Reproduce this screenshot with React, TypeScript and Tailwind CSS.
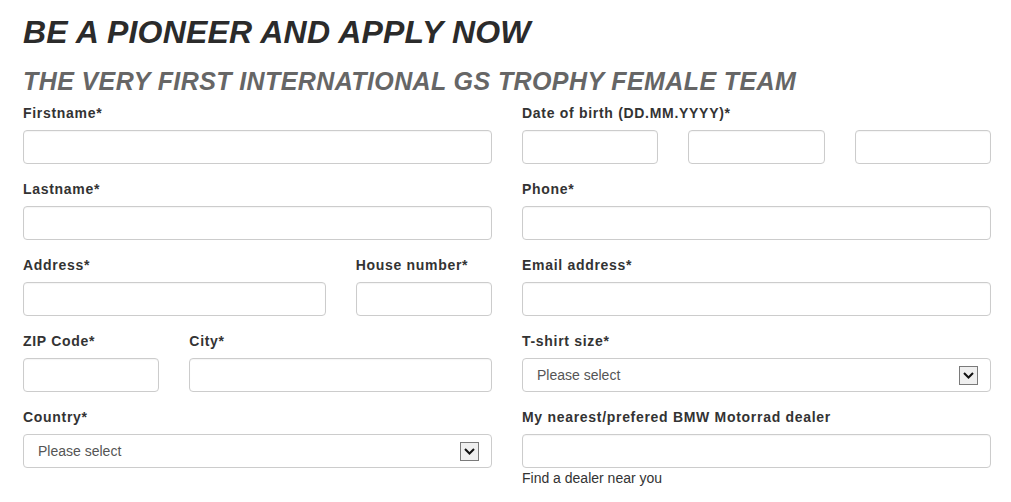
import type { ReactNode } from 'react';

function Field({ label, children, hint }: { label: string; children: ReactNode; hint?: string }) {
  return (
    <div className="flex flex-col">
      <label className="mb-[7px] text-[14px] leading-[20px] font-bold tracking-[0.7px] text-[#333]">{label}</label>
      {children}
      {hint && <p className="text-[14px] leading-[20px] text-[#333]">{hint}</p>}
    </div>
  );
}

function TextInput() {
  return (
    <input
      type="text"
      className="h-[34px] w-full rounded-[4px] border border-[#ccc] bg-white px-3 text-[14px] text-[#555] shadow-[inset_0_1px_1px_rgba(0,0,0,0.04)] outline-none"
    />
  );
}

function SelectBox() {
  return (
    <div className="flex h-[34px] w-full items-center justify-between rounded-[4px] border border-[#ccc] bg-white pr-[12px] pl-[14px]">
      <span className="text-[14px] text-[#555]">Please select</span>
      <span className="flex h-[19px] w-[19px] items-center justify-center border border-[#7a7a7a] bg-[#efefef]">
        <svg width="11" height="7" viewBox="0 0 11 7" fill="none">
          <polyline points="1,1 5.5,5.5 10,1" stroke="#111" strokeWidth="2" />
        </svg>
      </span>
    </div>
  );
}

export default function App() {
  return (
    <div className="min-h-[502px] bg-white pt-[16px] pr-[20px] pl-[23px] font-['Liberation_Sans',Arial,sans-serif]">
      <h1 className="text-[32px] leading-[32px] font-bold tracking-[0.2px] text-[#2b2b2b] italic">
        BE A PIONEER AND APPLY NOW
      </h1>
      <h2 className="mt-[21px] text-[25px] leading-[25px] font-bold tracking-[0.4px] text-[#666] italic">
        THE VERY FIRST INTERNATIONAL GS TROPHY FEMALE TEAM
      </h2>

      <form className="mt-[9px] grid grid-cols-2 gap-x-[30px]">
        <div className="flex flex-col gap-[15px]">
          <Field label="Firstname*">
            <TextInput />
          </Field>
          <Field label="Lastname*">
            <TextInput />
          </Field>
          <div className="grid grid-cols-3 gap-x-[30px]">
            <div className="col-span-2">
              <Field label="Address*">
                <TextInput />
              </Field>
            </div>
            <Field label="House number*">
              <TextInput />
            </Field>
          </div>
          <div className="grid grid-cols-3 gap-x-[30px]">
            <Field label="ZIP Code*">
              <TextInput />
            </Field>
            <div className="col-span-2">
              <Field label="City*">
                <TextInput />
              </Field>
            </div>
          </div>
          <Field label="Country*">
            <SelectBox />
          </Field>
        </div>

        <div className="flex flex-col gap-[15px]">
          <Field label="Date of birth (DD.MM.YYYY)*">
            <div className="grid grid-cols-3 gap-x-[30px]">
              <TextInput />
              <TextInput />
              <TextInput />
            </div>
          </Field>
          <Field label="Phone*">
            <TextInput />
          </Field>
          <Field label="Email address*">
            <TextInput />
          </Field>
          <Field label="T-shirt size*">
            <SelectBox />
          </Field>
          <Field label="My nearest/prefered BMW Motorrad dealer" hint="Find a dealer near you">
            <TextInput />
          </Field>
        </div>
      </form>
    </div>
  );
}
